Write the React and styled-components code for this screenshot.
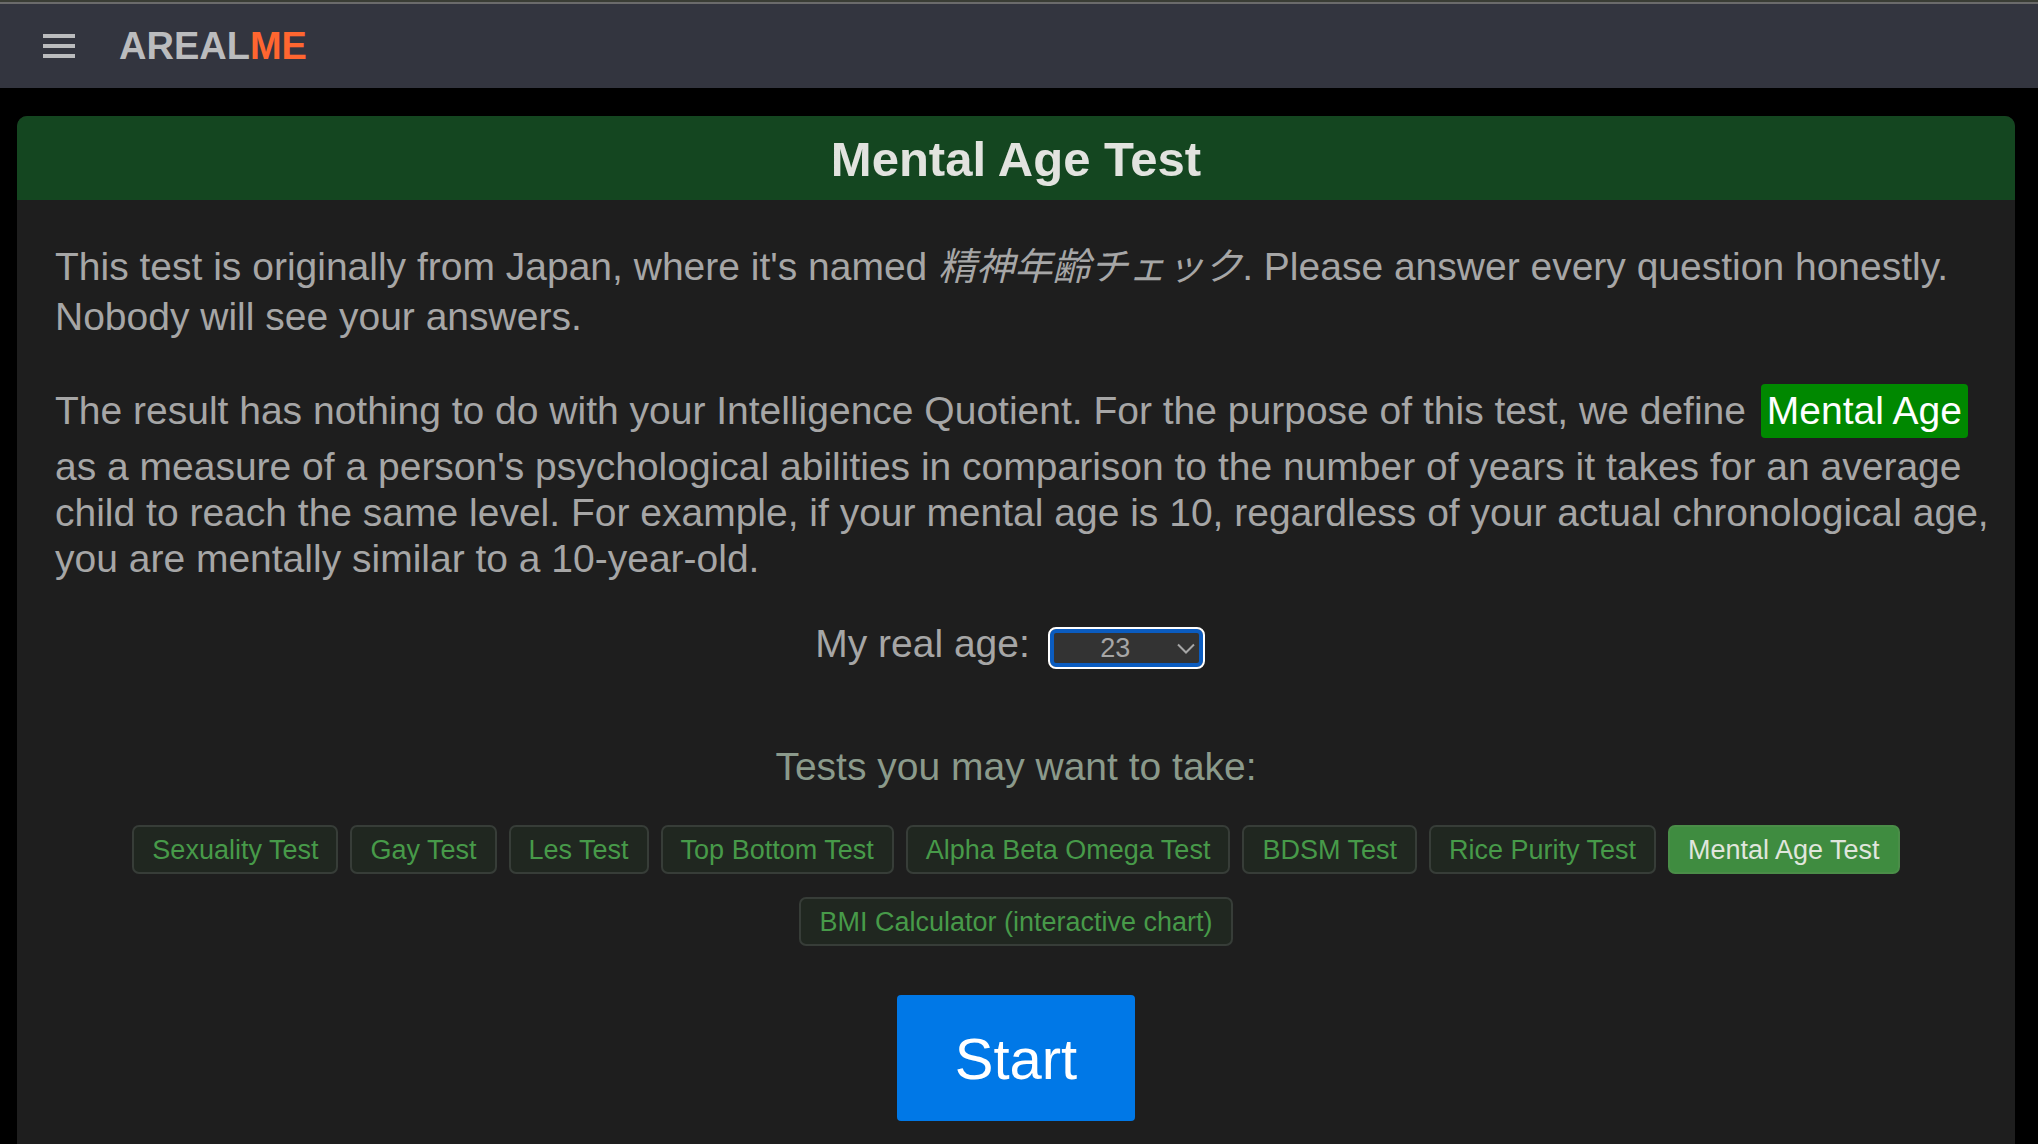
import React, { useState } from 'react';
import styled, { createGlobalStyle } from 'styled-components';

const GlobalStyle = createGlobalStyle`
  * {
    box-sizing: border-box;
  }

  body {
    margin: 0;
    background: #000;
    color: #a6a6a6;
    font-family: 'Liberation Sans', Arial, 'Noto Sans CJK JP', sans-serif;
    font-size: 39px;
    line-height: 46px;
  }
`;

const Page = styled.div`
  display: flex;
  flex-direction: column;
  min-height: 100vh;
`;

const TopBar = styled.header`
  display: flex;
  align-items: center;
  gap: 43px;
  height: 88px;
  padding: 2px 42px 0;
  background: #33353f;
  border-top: 2px solid #3a3d35;
  box-shadow: inset 0 2px 0 #6b6b6b;
`;

const MenuButton = styled.button`
  display: flex;
  padding: 0;
  border: none;
  background: none;
  color: #bbbcbe;
  cursor: pointer;
`;

const Logo = styled.a`
  color: #bbbcbe;
  font-size: 38px;
  font-weight: 700;
  text-decoration: none;

  span {
    color: #ff6630;
  }
`;

const Main = styled.main`
  display: flex;
  flex-direction: column;
  flex: 1;
  padding: 28px 23px 0 17px;
`;

const Panel = styled.section`
  display: flex;
  flex-direction: column;
  flex: 1;
  overflow: hidden;
  background: #1e1e1e;
  border-radius: 10px 10px 0 0;
`;

const Title = styled.h1`
  margin: 0;
  padding: 15px 14px 13px;
  background: #144620;
  color: #e2e3df;
  font-size: 49px;
  line-height: 56px;
  text-align: center;
`;

const Content = styled.div`
  display: flex;
  flex-direction: column;
  padding: 42px 20px 22px;
`;

const Intro = styled.p`
  margin: 0 0 36px;
  padding-left: 18px;
  line-height: 50px;

  em {
    font-size: 38px;
  }
`;

const Definition = styled.p`
  margin: 0;
  padding-left: 18px;
`;

const Term = styled.span`
  display: inline-block;
  margin: 6px 4px;
  padding: 4px 6px;
  border-radius: 4px;
  background: #008800;
  color: #fff;
`;

const AgeField = styled.div`
  display: flex;
  align-items: baseline;
  justify-content: center;
  gap: 18px;
  margin-top: 39px;
  padding-right: 12px;
`;

const SelectBox = styled.div`
  position: relative;
  display: flex;

  svg {
    position: absolute;
    top: 16px;
    right: 9px;
    pointer-events: none;
  }
`;

const Select = styled.select`
  appearance: none;
  width: 157px;
  height: 42px;
  padding: 0 22px 0 0;
  border: 2px solid #fff;
  border-radius: 8px;
  outline: none;
  background: #333;
  box-shadow: inset 0 0 0 4px #0b5cc0;
  color: #a6a6a6;
  font-family: inherit;
  font-size: 27px;
  text-align: center;
  text-align-last: center;
`;

const SuggestTitle = styled.h2`
  margin: 75px 0 0;
  color: #8b9a8b;
  font-size: 39px;
  font-weight: 400;
  text-align: center;
`;

const TestList = styled.nav`
  display: flex;
  flex-wrap: wrap;
  justify-content: center;
  gap: 23px 12px;
  margin-top: 35px;
`;

const TestLink = styled.a`
  padding: 1px 18px 0;
  border: 2px solid ${(props) => (props.$active ? '#4a8d48' : '#373d38')};
  border-radius: 7px;
  background: ${(props) => (props.$active ? '#3f8c40' : '#202720')};
  color: ${(props) => (props.$active ? '#e0e6dd' : '#479a49')};
  font-size: 27px;
  line-height: 44px;
  text-decoration: none;
`;

const StartButton = styled.button`
  align-self: center;
  width: 238px;
  height: 126px;
  margin-top: 49px;
  border: none;
  border-radius: 4px;
  background: #0078e7;
  color: #fff;
  font-family: inherit;
  font-size: 58px;
  cursor: pointer;
`;

const tests = [
  'Sexuality Test',
  'Gay Test',
  'Les Test',
  'Top Bottom Test',
  'Alpha Beta Omega Test',
  'BDSM Test',
  'Rice Purity Test',
  'Mental Age Test',
  'BMI Calculator (interactive chart)',
];

const ages = Array.from({ length: 96 }, (_, i) => i + 4);

export default function App() {
  const [age, setAge] = useState(23);

  return (
    <>
      <GlobalStyle />
      <Page>
        <TopBar>
          <MenuButton type="button" aria-label="Menu">
            <svg width="34" height="26" viewBox="0 0 34 26" fill="currentColor">
              <rect x="1" y="1" width="32" height="4" />
              <rect x="1" y="11" width="32" height="4" />
              <rect x="1" y="21" width="32" height="4" />
            </svg>
          </MenuButton>
          <Logo href="#">
            AREAL<span>ME</span>
          </Logo>
        </TopBar>
        <Main>
          <Panel>
            <Title>Mental Age Test</Title>
            <Content>
              <Intro>
                This test is originally from Japan, where it's named <em lang="ja">精神年齢チェック</em>. Please
                answer every question honestly. Nobody will see your answers.
              </Intro>
              <Definition>
                The result has nothing to do with your Intelligence Quotient. For the purpose of this test, we
                define <Term>Mental Age</Term> as a measure of a person's psychological abilities in comparison
                to the number of years it takes for an average child to reach the same level. For example, if
                your mental age is 10, regardless of your actual chronological age, you are mentally similar to
                a 10-year-old.
              </Definition>
              <AgeField>
                <label htmlFor="age">My real age:</label>
                <SelectBox>
                  <Select id="age" value={age} onChange={(e) => setAge(Number(e.target.value))}>
                    {ages.map((n) => (
                      <option key={n} value={n}>{n}</option>
                    ))}
                  </Select>
                  <svg width="20" height="12" viewBox="0 0 20 12" fill="none" stroke="#a6a6a6" strokeWidth="2">
                    <path d="M2 1.5l8 8 8-8" />
                  </svg>
                </SelectBox>
              </AgeField>
              <SuggestTitle>Tests you may want to take:</SuggestTitle>
              <TestList>
                {tests.map((name) => (
                  <TestLink key={name} href="#" $active={name === 'Mental Age Test'}>
                    {name}
                  </TestLink>
                ))}
              </TestList>
              <StartButton type="button">Start</StartButton>
            </Content>
          </Panel>
        </Main>
      </Page>
    </>
  );
}
